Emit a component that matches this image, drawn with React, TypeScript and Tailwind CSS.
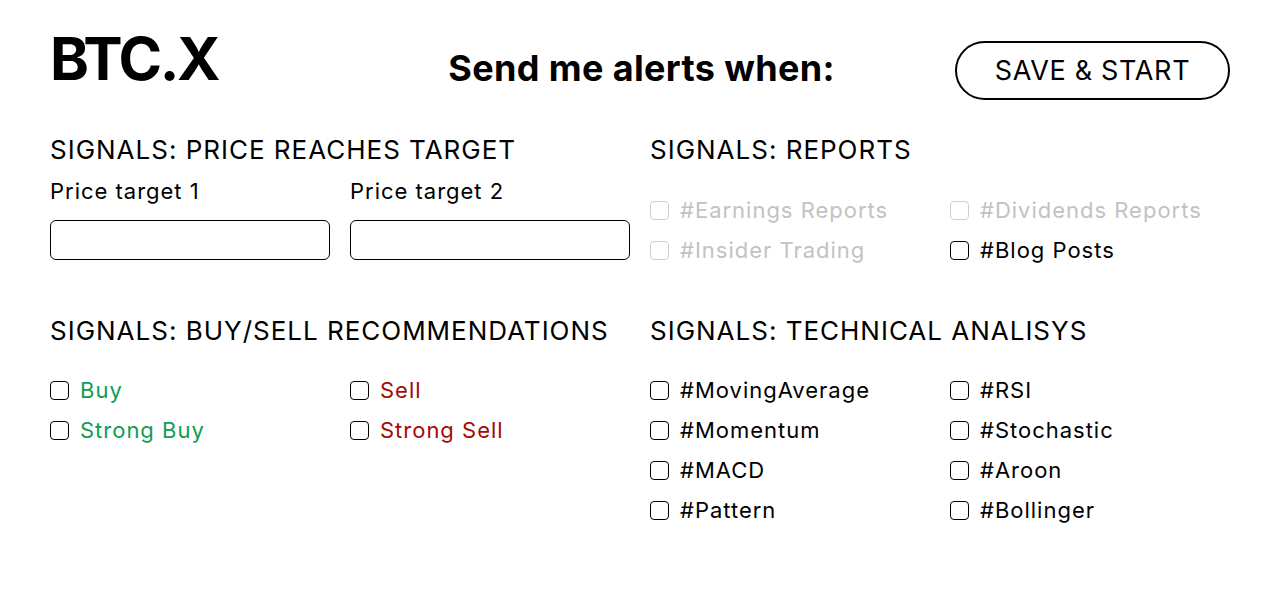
type Option = { label: string; tone?: "green" | "red" | "muted" };

const toneClass = (tone?: Option["tone"]) => {
  if (tone === "green") return "text-[#0f9d55]";
  if (tone === "red") return "text-[#a30a0a]";
  if (tone === "muted") return "text-[#c2c2c2]";
  return "text-black";
};

const CheckRow = ({ option }: { option: Option }) => {
  const muted = option.tone === "muted";
  return (
    <label className="flex h-10 items-center gap-[11px]">
      <input
        type="checkbox"
        disabled={muted}
        className={`h-[19px] w-[19px] shrink-0 appearance-none rounded-[4px] border bg-white ${
          muted ? "border-[#cfcfcf]" : "border-black"
        }`}
      />
      <span className={`text-[22px] tracking-[0.045em] ${toneClass(option.tone)}`}>{option.label}</span>
    </label>
  );
};

const CheckGrid = ({ left, right }: { left: Option[]; right: Option[] }) => (
  <div className="grid grid-cols-2 gap-x-5">
    <div className="flex flex-col">
      {left.map((o) => (
        <CheckRow key={o.label} option={o} />
      ))}
    </div>
    <div className="flex flex-col">
      {right.map((o) => (
        <CheckRow key={o.label} option={o} />
      ))}
    </div>
  </div>
);

const SectionTitle = ({ children }: { children: string }) => (
  <h2 className="h-10 text-[26px] leading-10 tracking-[0.038em]">{children}</h2>
);

export default function App() {
  return (
    <div className="min-h-screen bg-white px-[50px] pt-[30px] font-['Inter',sans-serif] text-black">
      <header className="flex h-[80px] items-center justify-between">
        <h1 className="-mt-[22px] text-[59px] font-bold tracking-[-0.04em]">BTC.X</h1>
        <p className="-mt-[4px] ml-[110px] text-[36px] font-bold tracking-[0.01em]">Send me alerts when:</p>
        <button
          type="button"
          className="h-[59px] w-[275px] rounded-full border-2 border-black pt-[2px] text-[27px] tracking-[0.025em]"
        >
          SAVE &amp; START
        </button>
      </header>

      <div className="mt-[20px] grid grid-cols-2 gap-x-5">
        <section>
          <SectionTitle>SIGNALS: PRICE REACHES TARGET</SectionTitle>
          <div className="grid grid-cols-2 gap-x-5">
            <label className="flex flex-col">
              <span className="h-[40px] text-[22px] leading-[42px] tracking-[0.045em]">Price target 1</span>
              <input type="text" className="mt-[10px] h-10 rounded-[6px] border border-black px-3" />
            </label>
            <label className="flex flex-col">
              <span className="h-[40px] text-[22px] leading-[42px] tracking-[0.045em]">Price target 2</span>
              <input type="text" className="mt-[10px] h-10 rounded-[6px] border border-black px-3" />
            </label>
          </div>
        </section>

        <section>
          <SectionTitle>SIGNALS: REPORTS</SectionTitle>
          <div className="mt-[20px]">
            <CheckGrid
              left={[
                { label: "#Earnings Reports", tone: "muted" },
                { label: "#Insider Trading", tone: "muted" },
              ]}
              right={[{ label: "#Dividends Reports", tone: "muted" }, { label: "#Blog Posts" }]}
            />
          </div>
        </section>

        <section className="mt-[41px]">
          <SectionTitle>SIGNALS: BUY/SELL RECOMMENDATIONS</SectionTitle>
          <div className="mt-[19px]">
            <CheckGrid
              left={[
                { label: "Buy", tone: "green" },
                { label: "Strong Buy", tone: "green" },
              ]}
              right={[
                { label: "Sell", tone: "red" },
                { label: "Strong Sell", tone: "red" },
              ]}
            />
          </div>
        </section>

        <section className="mt-[41px]">
          <SectionTitle>SIGNALS: TECHNICAL ANALISYS</SectionTitle>
          <div className="mt-[19px]">
            <CheckGrid
              left={[
                { label: "#MovingAverage" },
                { label: "#Momentum" },
                { label: "#MACD" },
                { label: "#Pattern" },
              ]}
              right={[{ label: "#RSI" }, { label: "#Stochastic" }, { label: "#Aroon" }, { label: "#Bollinger" }]}
            />
          </div>
        </section>
      </div>
    </div>
  );
}
